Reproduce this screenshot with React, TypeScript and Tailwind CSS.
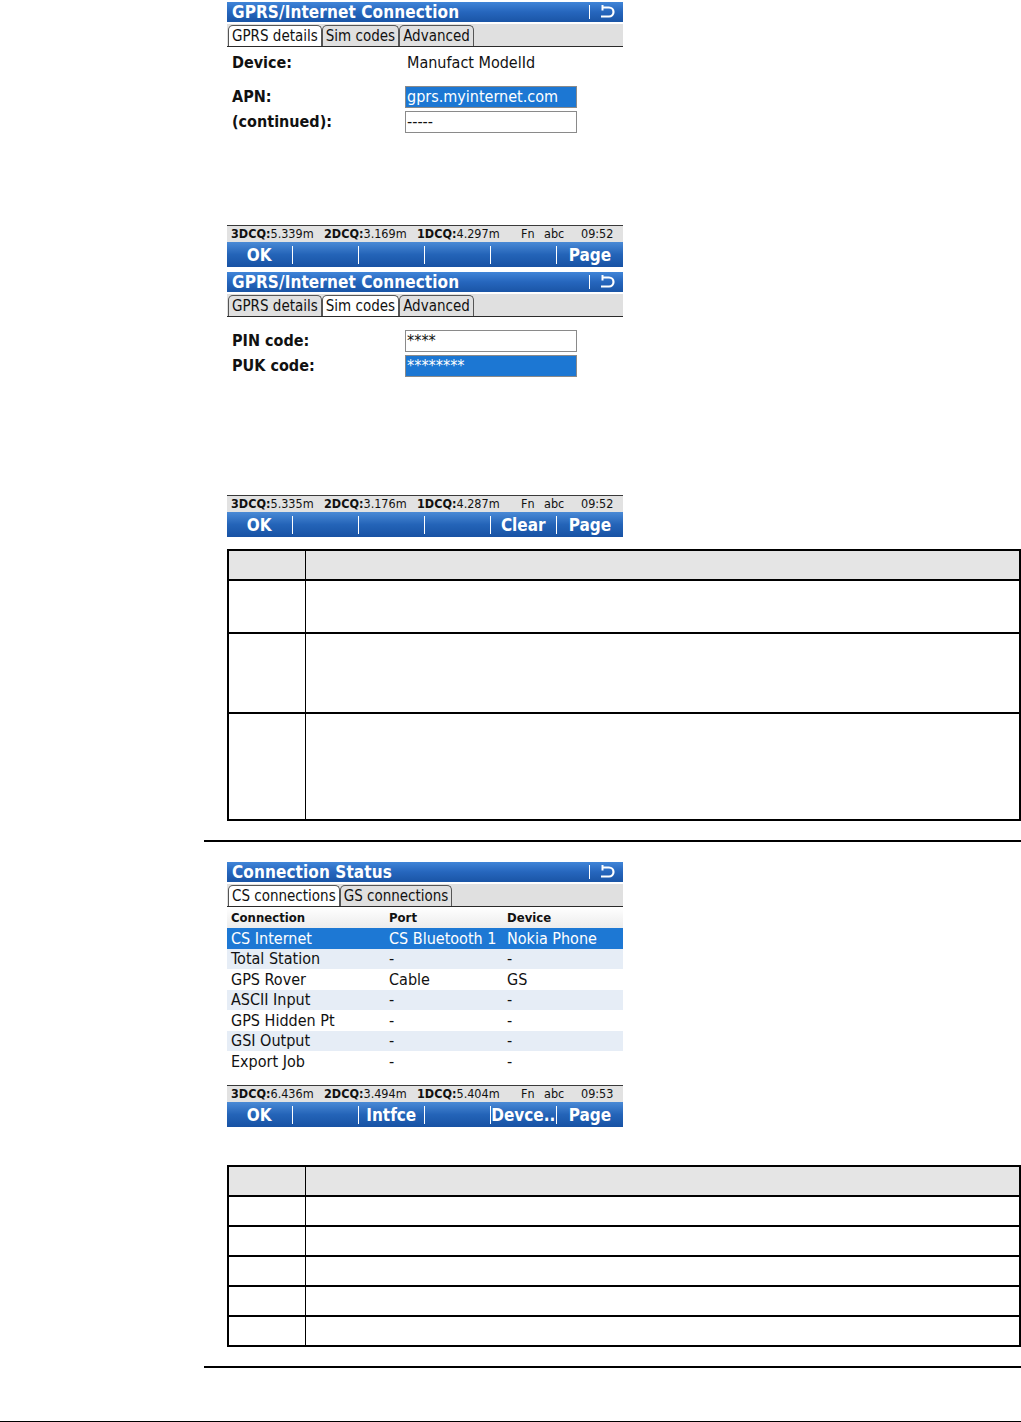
import React from "react";

const DEV = "font-['DejaVu_Sans_Condensed','DejaVu_Sans',sans-serif]";

function BackIcon() {
  return (
    <svg width="18" height="14" viewBox="0 0 18 14" className="ml-[8px]">
      <path d="M4 2.5 H11 A4.5 4.5 0 0 1 11 11.5 H3" fill="none" stroke="white" strokeWidth="2.2" />
      <path d="M4.5 0 V5.5" stroke="white" strokeWidth="2" />
    </svg>
  );
}

function TitleBar({ title }: { title: string }) {
  return (
    <div className="h-[20px] flex items-center pl-[5px] pr-[7px] bg-gradient-to-b from-[#4085d8] via-[#2666bd] to-[#1a55a6] text-white">
      <span className="flex-1 text-[17px] font-bold leading-none tracking-[0.1px]">{title}</span>
      <span className="w-[1.5px] h-[14px] bg-white" />
      <BackIcon />
    </div>
  );
}

function Tabs({ tabs, active }: { tabs: string[]; active: number }) {
  return (
    <div className="mt-[2px] h-[23px] bg-[#e0e0e0] border-b border-[#2a2a2a] flex items-end pl-[1px]">
      {tabs.map((t, i) => (
        <div
          key={t}
          className={
            "h-[21px] px-[3px] border border-b-0 border-[#555] rounded-t-[5px] text-[15px] leading-[21px] text-[#111] whitespace-nowrap " +
            (i === active ? "bg-white" : "bg-[#e0e0e0]")
          }
        >
          {t}
        </div>
      ))}
    </div>
  );
}

function StatusBar({ q3, q2, q1, time }: { q3: string; q2: string; q1: string; time: string }) {
  return (
    <div className="h-[17px] border-t border-[#3a3a3a] bg-[#e2e2e2] flex items-center pl-[4px] text-[12.5px] leading-none text-[#111] whitespace-nowrap">
      <span className="w-[93px]"><b>3DCQ:</b>{q3}</span>
      <span className="w-[93px]"><b>2DCQ:</b>{q2}</span>
      <span className="w-[104px]"><b>1DCQ:</b>{q1}</span>
      <span className="w-[23px]">Fn</span>
      <span className="w-[37px]">abc</span>
      <span>{time}</span>
    </div>
  );
}

function SoftKeys({ keys }: { keys: string[] }) {
  return (
    <div className="h-[25px] grid grid-cols-6 bg-gradient-to-b from-[#4a8ad6] via-[#2464b8] to-[#1752a4] text-white">
      {keys.map((k, i) => (
        <div key={i} className="flex items-center">
          <span className="flex-1 text-center pt-[2px] text-[17px] font-bold leading-none whitespace-nowrap">{k}</span>
          {i < 5 && <span className="w-[1.5px] h-[18px] bg-white" />}
        </div>
      ))}
    </div>
  );
}

function Screen({
  title,
  tabs,
  active,
  status,
  keys,
  children,
}: {
  title: string;
  tabs: string[];
  active: number;
  status: [string, string, string, string];
  keys: string[];
  children: React.ReactNode;
}) {
  return (
    <div className={"w-[396px] h-[265px] flex flex-col bg-white " + DEV}>
      <TitleBar title={title} />
      <Tabs tabs={tabs} active={active} />
      <div className="flex-1 min-h-0">{children}</div>
      <StatusBar q3={status[0]} q2={status[1]} q1={status[2]} time={status[3]} />
      <SoftKeys keys={keys} />
    </div>
  );
}

function Field({ label, value, selected, input = true }: { label: string; value: string; selected?: boolean; input?: boolean }) {
  return (
    <div className="flex items-center h-[22px] pl-[5px] text-[16px] text-[#111]">
      <span className="w-[173px] font-bold">{label}</span>
      {input ? (
        <div
          className={
            "w-[172px] h-[22px] border border-[#8a8a8a] pl-[1px] leading-[20px] " +
            (selected ? "bg-[#1c77d3] text-white" : "bg-white")
          }
        >
          {value}
        </div>
      ) : (
        <span className="pl-[2px]">{value}</span>
      )}
    </div>
  );
}

function Table({ head, rows }: { head: number; rows: number[] }) {
  return (
    <div className="ml-[227px] w-[794px] border-2 border-black">
      <div className="flex bg-[#e5e5e5] border-b-2 border-black" style={{ height: head }}>
        <div className="w-[77px] border-r border-black" />
        <div className="flex-1" />
      </div>
      {rows.map((h, i) => (
        <div key={i} className={"flex " + (i < rows.length - 1 ? "border-b-2 border-black" : "")} style={{ height: h }}>
          <div className="w-[77px] border-r border-black" />
          <div className="flex-1" />
        </div>
      ))}
    </div>
  );
}

const conns = [
  ["CS Internet", "CS Bluetooth 1", "Nokia Phone"],
  ["Total Station", "-", "-"],
  ["GPS Rover", "Cable", "GS"],
  ["ASCII Input", "-", "-"],
  ["GPS Hidden Pt", "-", "-"],
  ["GSI Output", "-", "-"],
  ["Export Job", "-", "-"],
];

export default function App() {
  return (
    <div className="w-[1021px] h-[1422px] bg-white flex flex-col pt-[2px]">
      <div className="ml-[227px]">
        <Screen
          title="GPRS/Internet Connection"
          tabs={["GPRS details", "Sim codes", "Advanced"]}
          active={0}
          status={["5.339m", "3.169m", "4.297m", "09:52"]}
          keys={["OK", "", "", "", "", "Page"]}
        >
          <div className="flex flex-col pt-[5px]">
            <Field label="Device:" value="Manufact ModelId" input={false} />
            <div className="h-[12px]" />
            <Field label="APN:" value="gprs.myinternet.com" selected />
            <div className="h-[3px]" />
            <Field label="(continued):" value="-----" />
          </div>
        </Screen>
      </div>

      <div className="ml-[227px] mt-[5px]">
        <Screen
          title="GPRS/Internet Connection"
          tabs={["GPRS details", "Sim codes", "Advanced"]}
          active={1}
          status={["5.335m", "3.176m", "4.287m", "09:52"]}
          keys={["OK", "", "", "", "Clear", "Page"]}
        >
          <div className="flex flex-col gap-[3px] pt-[13px]">
            <Field label="PIN code:" value="****" />
            <Field label="PUK code:" value="********" selected />
          </div>
        </Screen>
      </div>

      <div className="mt-[12px]">
        <Table head={30} rows={[53, 80, 105]} />
      </div>

      <div className="ml-[204px] mt-[19px] h-[2px] bg-black" />

      <div className="ml-[227px] mt-[20px]">
        <Screen
          title="Connection Status"
          tabs={["CS connections", "GS connections"]}
          active={0}
          status={["6.436m", "3.494m", "5.404m", "09:53"]}
          keys={["OK", "", "Intfce", "", "Devce..", "Page"]}
        >
          <div className="flex flex-col text-[#111]">
            <div className="h-[21px] flex items-center pl-[4px] pt-[1px] text-[13px] font-bold bg-gradient-to-b from-white to-[#ececec]">
              <span className="w-[158px]">Connection</span>
              <span className="w-[118px]">Port</span>
              <span>Device</span>
            </div>
            {conns.map((r, i) => (
              <div
                key={i}
                className={
                  "h-[20.5px] flex items-center pl-[4px] pt-[1px] text-[16px] leading-none whitespace-nowrap " +
                  (i === 0 ? "bg-[#1d78d4] text-white" : i % 2 === 1 ? "bg-[#e6edf6]" : "bg-white")
                }
              >
                <span className="w-[158px]">{r[0]}</span>
                <span className="w-[118px]">{r[1]}</span>
                <span>{r[2]}</span>
              </div>
            ))}
          </div>
        </Screen>
      </div>

      <div className="mt-[38px]">
        <Table head={30} rows={[30, 30, 30, 30, 28]} />
      </div>

      <div className="ml-[204px] mt-[19px] h-[2px] bg-black" />

      <div className="mt-[53px] h-[1px] bg-black" />
    </div>
  );
}
